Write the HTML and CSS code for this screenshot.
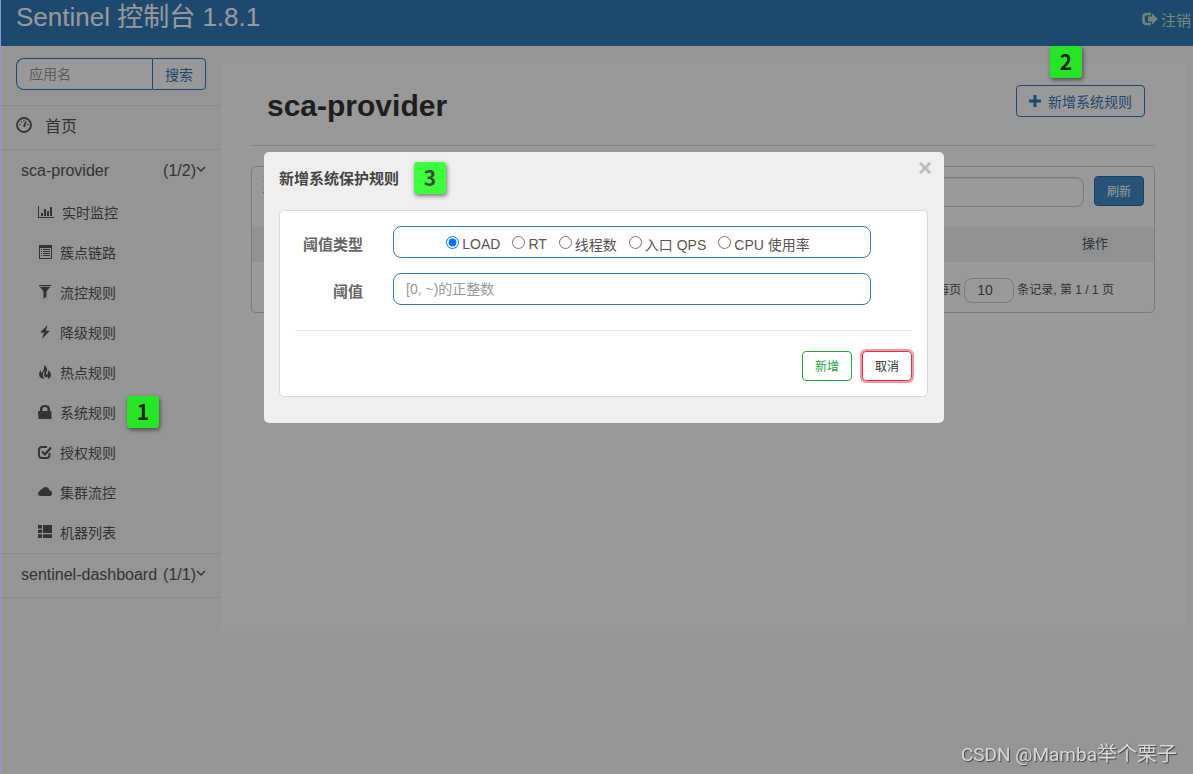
FILE: index.html
```html
<!DOCTYPE html>
<html lang="zh-CN">
<head>
    <meta charset="UTF-8" />
    <meta name="viewport" content="width=device-width, initial-scale=1" />
    <title>Sentinel 控制台</title>
    <link rel="stylesheet" href="styles.css">
</head>
<body>
    <header class="navbar">
        <a class="brand" href="#">Sentinel 控制台 1.8.1</a>
        <a class="logout" href="#">
            <svg class="icon" viewBox="0 0 16 14"><path d="M9 2H4.500Q1.500 2 1.500 5v4Q1.500 12 4.500 12H9" fill="none" stroke="currentColor" stroke-width="2.600"/><path d="M6 4.500h4V1.500l6 5.500-6 5.500v-3H6z"/></svg>注销
        </a>
    </header>

    <div class="wrapper">
        <aside class="sidebar">
            <form class="search">
                <input type="text" placeholder="应用名" aria-label="应用名" />
                <button type="button">搜索</button>
            </form>
            <nav>
                <a class="home" href="#">
                    <svg class="icon icon-lg" viewBox="0 0 16 16"><circle cx="8" cy="8" r="7" fill="none" stroke="currentColor" stroke-width="1.800"/><path d="M7.200 8.500L9.600 4l1 .4-1.400 5a1 1 0 1 1-2-.9z"/><circle cx="4" cy="7.500" r=".8"/><circle cx="5.500" cy="4.700" r=".8"/><circle cx="8" cy="3.800" r=".7"/><circle cx="12" cy="7.500" r=".8"/></svg>首页
                </a>
                <a class="app" href="#">
                    <span>sca-provider</span>
                    <span class="count">(1/2)<svg class="chevron" viewBox="0 0 10 10"><path d="M1 2l4 4 4-4" fill="none" stroke="currentColor" stroke-width="1.500"/></svg></span>
                </a>
                <ul class="menu">
                    <li><a href="#"><svg class="icon icon-wide" viewBox="0 0 16 14"><path d="M0 1h1v11h15v1H0zM3 8h2v3H3zM6 4h2v7H6zM9 6h2v5H9zM12 2h2v9h-2z"/></svg>实时监控</a></li>
                    <li><a href="#"><svg class="icon" viewBox="0 0 14 14"><path fill-rule="evenodd" d="M1 0h13v14H1zM2 3v10h11V3z"/><path d="M3 4h1v1H3zM5 4h7v1H5zM3 6h1v1H3zM5 6h7v1H5zM3 8h1v1H3zM5 8h7v1H5zM3 10h1v1H3zM5 10h7v1H5z"/></svg>簇点链路</a></li>
                    <li><a href="#"><svg class="icon" viewBox="0 0 14 14"><path d="M1 0h12v1.200H1zM2 2h10L8.500 6.500V12l-3 1.500v-7z"/></svg>流控规则</a></li>
                    <li><a href="#"><svg class="icon" viewBox="0 0 14 14"><path d="M9.500 0L2 7.500h4L4 14l8-8.300H8z"/></svg>降级规则</a></li>
                    <li><a href="#"><svg class="icon" viewBox="0 0 14 14"><path d="M6 0c3 2 4 4 2.500 7-.5 1-.7 2 0 3C10 9 10.500 7.500 9.800 5 12 6 13 8 13 10c0 2-1.500 3.500-3.500 4 .7-1 .5-1.800 0-2.500C8 13 5.800 12 6 9.500 6.100 8 7 7.500 7 6 5 7 4.500 9 5 11c.2 1.200.7 2 1.500 3C3 13.700 1 12 1 9.500 1 7.500 2 6.500 3 5c-.1 1.500 0 2.400.5 3C4.500 6.500 7 4 6 0z"/></svg>热点规则</a></li>
                    <li><a href="#"><svg class="icon" viewBox="0 0 14 14"><path fill-rule="evenodd" d="M0 6h2V4Q2 0 7 0t5 4v2h1.500v8H.500zM4.500 6h5V4Q9.500 2 7 2T4.500 4z"/></svg>系统规则<span class="badge badge-dim badge-menu">1</span></a></li>
                    <li><a href="#"><svg class="icon" viewBox="0 0 14 14"><path d="M9 2H4Q1 2 1 5v5q0 3 3 3h4.500q3 0 3-3V8" fill="none" stroke="currentColor" stroke-width="1.900"/><path d="M4 6.500l3 3L13 2.500" fill="none" stroke="currentColor" stroke-width="2.200"/></svg>授权规则</a></li>
                    <li><a href="#"><svg class="icon" viewBox="0 0 14 14"><path d="M3 11Q0 11 0 8.500 0 6.500 2 6 2 4 4 4.300 5 2 7.500 2 11 2 11.200 5.300 14 5.500 14 8.200 14 11 11.500 11z"/></svg>集群流控</a></li>
                    <li><a href="#"><svg class="icon" viewBox="0 0 14 14"><path d="M0 0h4v3.500H0zM5 0h9v8H5zM0 4.700h4V8H0zM0 9.200h4V13H0zM5 9.200h9V13H5z"/></svg>机器列表</a></li>
                </ul>
                <a class="app app-last" href="#">
                    <span>sentinel-dashboard</span>
                    <span class="count">(1/1)<svg class="chevron" viewBox="0 0 10 10"><path d="M1 2l4 4 4-4" fill="none" stroke="currentColor" stroke-width="1.500"/></svg></span>
                </a>
            </nav>
        </aside>

        <main class="content">
            <div class="page-head">
                <h1>sca-provider</h1>
                <button class="btn-add" type="button">
                    <svg class="icon-plus" viewBox="0 0 12 12"><path d="M4.500 0h3v4.500H12v3H7.500V12h-3V7.500H0v-3h4.500z"/></svg>新增系统规则
                    <span class="badge badge-dim badge-top">2</span>
                </button>
            </div>
            <section class="card">
                <div class="toolbar">
                    <span class="card-title">系统规则</span>
                    <input type="text" aria-label="关键字" />
                    <button class="btn-refresh" type="button">刷新</button>
                </div>
                <table class="rules">
                    <thead>
                        <tr><th></th><th></th><th class="action">操作</th></tr>
                    </thead>
                </table>
                <div class="pager">
                    <label for="pageSize">每页</label>
                    <input id="pageSize" type="text" value="10" />
                    <span>条记录, 第 1 / 1 页</span>
                </div>
            </section>
        </main>
    </div>

    <div class="overlay">
        <div class="dialog" role="dialog" aria-labelledby="dialogTitle">
            <div class="dialog-head">
                <h2 id="dialogTitle">新增系统保护规则</h2>
                <span class="badge">3</span>
                <button class="close" type="button" aria-label="关闭">×</button>
            </div>
            <form class="panel">
                <div class="row">
                    <span class="row-label" id="typeLabel">阈值类型</span>
                    <div class="field radios" role="radiogroup" aria-labelledby="typeLabel">
                        <label><input type="radio" name="grade" checked />LOAD</label>
                        <label><input type="radio" name="grade" />RT</label>
                        <label><input type="radio" name="grade" />线程数</label>
                        <label><input type="radio" name="grade" />入口 QPS</label>
                        <label><input type="radio" name="grade" />CPU 使用率</label>
                    </div>
                </div>
                <div class="row">
                    <label class="row-label" for="threshold">阈值</label>
                    <input class="field" id="threshold" type="text" placeholder="[0, ~)的正整数" />
                </div>
                <div class="actions">
                    <button class="btn-save" type="button">新增</button>
                    <button class="btn-cancel" type="button">取消</button>
                </div>
            </form>
        </div>
    </div>

    <div class="watermark"><span>CSDN @Mamba</span>举个栗子</div>
</body>
</html>
```
FILE: styles.css
```css
* {
    box-sizing: border-box;
}
body {
    margin: 0;
    padding-left: 1px;
    min-height: 100vh;
    background-color: #f8f8f8;
    color: #555;
    font-family: "Liberation Sans", "Noto Sans CJK SC", sans-serif;
    font-size: 14px;
}
a {
    color: inherit;
    text-decoration: none;
}
input, button {
    font-family: inherit;
    font-size: 14px;
    color: inherit;
    background-color: transparent;
}
button {
    padding: 0;
    cursor: pointer;
}
svg {
    fill: currentColor;
    flex: none;
}
.icon {
    width: 14px;
    height: 14px;
}
.icon-wide {
    width: 16px;
}

/* header */
.navbar {
    display: flex;
    justify-content: space-between;
    height: 46px;
    padding: 0 2px 0 15px;
    background-color: #337ab7;
}
.brand {
    color: #fff;
    font-size: 26px;
    line-height: 34px;
}
.logout {
    display: flex;
    align-items: center;
    gap: 3px;
    height: 38px;
    color: #bfe0cc;
    font-size: 15px;
}
.logout .icon {
    width: 16px;
}

/* sidebar */
.wrapper {
    display: flex;
    align-items: flex-start;
}
.sidebar {
    flex: none;
    width: 220px;
}
.search {
    display: flex;
    padding: 12px 15px 15px;
    border-bottom: 1px solid #e7e7e7;
}
.search input {
    flex: 1;
    min-width: 0;
    height: 32px;
    padding: 0 12px;
    border: 1px solid #337ab7;
    border-right: 0;
    border-radius: 8px 0 0 8px;
    background-color: #fff;
}
.search button {
    width: 54px;
    height: 32px;
    border: 1px solid #337ab7;
    border-radius: 0 4px 4px 0;
    background-color: #fff;
    color: #337ab7;
}
input::placeholder {
    color: #999;
}
.home, .app {
    display: flex;
    align-items: center;
    height: 44px;
    font-size: 16px;
}
.home {
    gap: 13px;
    padding: 0 15px 5px;
    border-bottom: 1px solid #e7e7e7;
}
.icon-lg {
    width: 16px;
    height: 16px;
}
.app {
    justify-content: space-between;
    height: 43px;
    padding: 0 15px 2px 20px;
}
.app-last {
    height: 45px;
    border-top: 1px solid #e7e7e7;
    border-bottom: 1px solid #e7e7e7;
}
.count {
    display: flex;
}
.chevron {
    width: 10px;
    height: 10px;
    margin-top: 3px;
}
.menu {
    margin: 0;
    padding: 0;
    list-style: none;
}
.menu a {
    display: flex;
    align-items: center;
    gap: 8px;
    height: 40px;
    padding: 0 0 3px 37px;
}

/* numbered marks */
.badge {
    flex: none;
    width: 32px;
    height: 32px;
    border-radius: 3px;
    background-color: #3dff3d;
    box-shadow: 1px 2px 4px rgba(0, 0, 0, 0.5);
    color: #3c4a3c;
    font-family: "Noto Sans CJK SC", sans-serif;
    font-size: 21px;
    font-weight: bold;
    line-height: 30px;
    text-align: center;
}
.badge-dim {
    z-index: 20;
    background-color: #27e427;
    color: #222;
}
.badge-menu {
    position: relative;
    margin-left: 3px;
}
.badge-top {
    position: absolute;
    top: -40px;
    left: 33px;
}

/* content */
.content {
    flex: 1;
    min-width: 0;
    min-height: 568px;
    margin: 17px 8px 0 0;
    padding: 0 30px;
    background-color: #fff;
}
.page-head {
    display: flex;
    justify-content: space-between;
    align-items: flex-start;
    padding: 22px 10px 18px 16px;
    border-bottom: 1px solid #ddd;
}
h1 {
    margin: 0;
    color: #333;
    font-size: 30px;
    line-height: 42px;
}
.btn-add {
    position: relative;
    display: flex;
    align-items: center;
    gap: 7px;
    height: 32px;
    padding: 0 12px;
    border: 1px solid #337ab7;
    border-radius: 4px;
    color: #337ab7;
}
.icon-plus {
    width: 12px;
    height: 12px;
}
.card {
    margin-top: 20px;
    border: 1px solid #ccc;
    border-radius: 5px;
}
.toolbar {
    display: flex;
    gap: 10px;
    height: 60px;
    padding: 10px;
}
.card-title {
    margin-right: auto;
    line-height: 20px;
}
.toolbar input {
    width: 300px;
    height: 30px;
    border: 1px solid #ccc;
    border-radius: 8px;
    box-shadow: inset 0 1px 1px rgba(0, 0, 0, 0.1);
}
.btn-refresh {
    width: 50px;
    height: 30px;
    margin-top: -1px;
    padding-bottom: 2px;
    border: 1px solid #2e6da4;
    border-radius: 4px;
    background-color: #428bca;
    color: #fff;
    font-size: 12px;
}
.rules {
    width: 100%;
    border-collapse: collapse;
    background-color: #f0f2f5;
}
.rules th {
    height: 35px;
    padding: 0 0 4px;
    font-size: 13px;
    font-weight: normal;
}
.rules .action {
    width: 118px;
    text-align: center;
}
.pager {
    display: flex;
    justify-content: flex-end;
    align-items: center;
    gap: 3px;
    height: 50px;
    padding: 6px 40px 0 0;
    font-size: 12px;
}
.pager label, .pager span {
    padding-bottom: 4px;
}
.pager input {
    width: 50px;
    height: 25px;
    padding: 0 12px;
    border: 1px solid #ccc;
    border-radius: 8px;
}

/* dialog */
.overlay {
    position: fixed;
    inset: 0;
    z-index: 10;
    display: flex;
    justify-content: center;
    align-items: flex-start;
    padding: 152px 0 0 14px;
    border-left: 1px solid #9090dc;
    background-color: rgba(0, 0, 0, 0.4);
}
.dialog {
    width: 680px;
    padding: 0 16px 26px 15px;
    border-radius: 5px;
    background-color: #efefef;
    color: #555;
}
.dialog-head {
    display: flex;
    gap: 15px;
    padding: 10px 0 16px;
}
.dialog-head h2 {
    margin: 0;
    color: #444;
    font-size: 15px;
    line-height: 34px;
    height: 32px;
}
.close {
    width: 14px;
    height: 14px;
    margin: -1px -4px 0 auto;
    border: 0;
    color: #bbb;
    font-size: 24px;
    font-weight: bold;
    line-height: 14px;
}
.panel {
    padding: 15px;
    border: 1px solid #dadada;
    border-radius: 5px;
    background-color: #fff;
}
.row {
    display: grid;
    grid-template-columns: 68px 1fr;
    column-gap: 30px;
    height: 32px;
    margin-bottom: 15px;
    padding-right: 41px;
}
.row-label {
    color: #666;
    font-size: 15px;
    font-weight: bold;
    line-height: 38px;
    text-align: right;
}
.field {
    height: 32px;
    padding: 0 12px;
    border: 1px solid #337ab7;
    border-radius: 8px;
}
.radios {
    display: flex;
    justify-content: center;
    gap: 12px;
    padding: 4px 20px 0 12px;
}
.radios label {
    display: flex;
    align-items: center;
    gap: 3px;
    white-space: nowrap;
}
.radios input {
    width: 13px;
    height: 13px;
    margin: 0 0 3px;
}
.actions {
    display: flex;
    justify-content: flex-end;
    gap: 10px;
    margin-top: 25px;
    padding-top: 20px;
    border-top: 1px solid #e5e5e5;
}
.actions button {
    width: 50px;
    height: 30px;
    padding-bottom: 2px;
    border-radius: 4px;
    font-size: 12px;
}
.actions .btn-save {
    border: 1px solid #28a745;
    color: #28a745;
}
.actions .btn-cancel {
    border: 1px solid #dc3545;
    box-shadow: 0 0 0 2px rgba(220, 53, 69, 0.5);
    color: #333;
}

.watermark {
    position: fixed;
    right: 16px;
    bottom: 7px;
    z-index: 30;
    color: #d8d8d8;
    font-size: 20px;
    text-shadow: 1px 1px 1px #444;
}
.watermark span {
    font-family: Roboto, sans-serif;
    font-size: 19px;
}
```
